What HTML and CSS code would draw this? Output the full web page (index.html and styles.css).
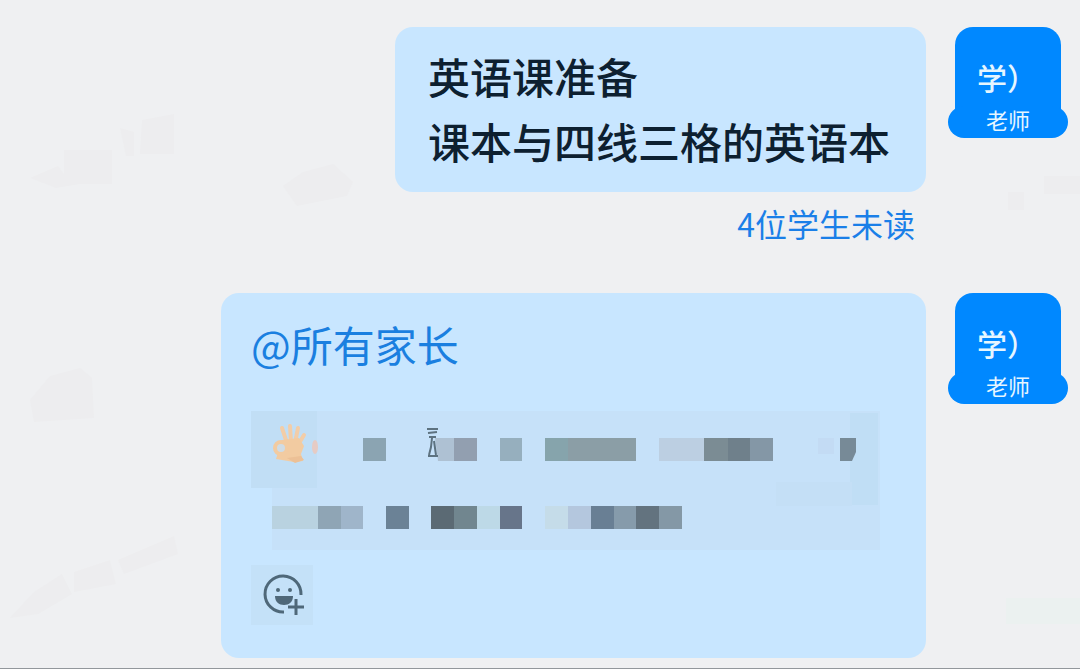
FILE: index.html
```html
<!DOCTYPE html>
<html lang="zh-CN">
<head>
    <meta charset="UTF-8">
    <meta name="viewport" content="width=device-width, initial-scale=1.0">
    <title>班级群</title>
    <link rel="stylesheet" href="styles.css">
</head>
<body>

<svg class="watermark" viewBox="0 0 1080 669" aria-hidden="true">
    <path d="M30 178l28-12 6 8 40-16v22l-48 8zM64 150h48v34H64zM120 128l14 4v24h-8zM142 120l32-6v40h-34z"/>
    <path d="M283 186l20-14 30-8 20 18-6 14-50 10z"/>
    <path d="M30 400l20-24 30-8 12 10 2 40-60 4z"/>
    <path d="M10 618l24-26 28-18 10 20-34 20zM74 572l36-12 6 24-42 8zM118 560l56-24 4 18-54 20z"/>
    <path d="M1008 192h16v18h-16zM1044 176h36v18h-36z"/>
    <path class="tint" d="M1006 598h74v26h-74z"/>
</svg>

<main class="chat">
    <article class="message">
        <div class="content">
            <div class="bubble">
                <p>英语课准备<br>课本与四线三格的英语本</p>
            </div>
            <a class="unread" href="#">4位学生未读</a>
        </div>
        <div class="avatar">
            <span class="name">学）</span>
            <span class="role">老师</span>
        </div>
    </article>

    <article class="message">
        <div class="bubble notice">
            <p><a class="mention" href="#">@所有家长</a></p>

            <!-- hidden text, only the blocks are left -->
            <svg class="mosaic" viewBox="251 411 629 139" role="img" aria-label="已打码内容">
                <path fill="#c6e1f9" d="M251 411h629v139H272v-62h-21z"/>
                <path fill="#c1def5" d="M251 411h66v77h-66z"/>
                <path fill="#c0def5" d="M850 413h28v92h-72v-16h44z"/>
                <path fill="#c4dff6" d="M776 482h76v24h-76z"/>

                <!-- hand -->
                <g fill="none" stroke="#f2cda8" stroke-width="4" stroke-linecap="round">
                    <path d="M282 428l5 15M290 426l1 16M298 428l-3 15M304 435l-6 10"/>
                </g>
                <path fill="#f2cba1" d="M282 440l17-2 5 8-3 8 2 7-9 1-18-3z"/>
                <circle cx="281" cy="448" r="6" fill="#cfdce6" stroke="#f2cba1" stroke-width="4"/>
                <path fill="#ecc096" d="M287 458l14-2 3 4-9 3z"/>
                <ellipse cx="315" cy="447" rx="3" ry="7" fill="#e6cbc4"/>

                <path fill="#8ba4b2" d="M363 438h23v23h-23z"/>
                <path fill="#aec1d3" d="M435 438h19v23h-16z"/>
                <path fill="#929fb0" d="M454 438h23v23h-23z"/>
                <path fill="none" stroke="#5d7280" stroke-width="2" d="M427 429h11M428 433l9-1M429 437h7M432 438l-1 9-2 8M434 441l2 14M428 456h10"/>
                <path fill="#96afbe" d="M500 438h22v23h-22z"/>
                <path fill="#86a4ac" d="M545 438h23v23h-23z"/>
                <path fill="#8b9ea6" d="M568 438h68v23h-68z"/>
                <path fill="#bccfe2" d="M659 438h45v23h-45z"/>
                <path fill="#7b8c94" d="M704 438h24v23h-24z"/>
                <path fill="#6f808b" d="M728 438h22v23h-22z"/>
                <path fill="#8497a6" d="M750 438h23v23h-23z"/>
                <path fill="#c3dbf4" d="M818 438h16v16h-16z"/>
                <path fill="#778a97" d="M840 438h16v14l-4 9h-12z"/>

                <path fill="#b9d2e0" d="M272 506h46v23h-46z"/>
                <path fill="#8fa5b5" d="M318 506h23v23h-23z"/>
                <path fill="#9fb5ca" d="M341 506h22v23h-22z"/>
                <path fill="#6b8296" d="M386 506h23v23h-23z"/>
                <path fill="#5b6a74" d="M431 506h23v23h-23z"/>
                <path fill="#71868f" d="M454 506h23v23h-23z"/>
                <path fill="#bdd9e7" d="M477 506h23v23h-23z"/>
                <path fill="#67758a" d="M500 506h22v23h-22z"/>
                <path fill="#c5dce9" d="M545 506h23v23h-23z"/>
                <path fill="#b4c7de" d="M568 506h23v23h-23z"/>
                <path fill="#697f94" d="M591 506h23v23h-23z"/>
                <path fill="#869bab" d="M614 506h22v23h-22z"/>
                <path fill="#63737f" d="M636 506h23v23h-23z"/>
                <path fill="#8498a6" d="M659 506h23v23h-23z"/>
            </svg>

            <button class="react" type="button" aria-label="添加表情">
                <svg viewBox="0 0 42 42">
                    <path class="line" d="M38 21A18 18 0 1 0 21 38"/>
                    <circle cx="15" cy="16" r="2"/>
                    <circle cx="27" cy="16" r="2"/>
                    <path d="M12 22h18c0 6-4 9-9 9s-9-3-9-9z"/>
                    <path class="line" d="M33 25v16M25 33h16"/>
                </svg>
            </button>
        </div>
        <div class="avatar">
            <span class="name">学）</span>
            <span class="role">老师</span>
        </div>
    </article>
</main>

</body>
</html>
```

FILE: styles.css
```css
* {
    box-sizing: border-box;
}
body {
    margin: 0;
    min-height: 100vh;
    font-family: "Noto Sans CJK SC", sans-serif;
    background-color: #eff0f2;
    border-bottom: 1px solid #92979c;
}
p {
    margin: 0;
}
a {
    text-decoration: none;
}
.watermark {
    position: absolute;
    top: 0;
    left: 0;
    width: 100%;
    fill: #ededef;
}
.watermark .tint {
    fill: #ebf1f0;
}
.chat {
    position: relative;
    display: flex;
    flex-direction: column;
    gap: 44px;
    padding: 27px 12px 10px;
}
.message {
    display: flex;
    justify-content: flex-end;
    align-items: flex-start;
    gap: 22px;
}
.content {
    display: flex;
    flex-direction: column;
    align-items: flex-end;
    gap: 8px;
}
.bubble {
    padding: 16px 36px 19px 33px;
    border-radius: 18px;
    background-color: #c8e6ff;
    color: #0d2030;
    font-size: 42px;
    font-weight: 500;
    line-height: 65px;
}
.unread {
    padding: 0 11px 2px 0;
    color: #1a7fe8;
    font-size: 32px;
    line-height: 47px;
}
.notice {
    display: flex;
    flex-direction: column;
    align-items: flex-start;
    width: 705px;
    padding: 18px 46px 33px 30px;
}
.mention {
    color: #1a7fe0;
    font-weight: 400;
}
.mosaic {
    width: 100%;
    margin-top: 35px;
}
.react {
    display: flex;
    align-items: center;
    justify-content: center;
    width: 62px;
    height: 60px;
    margin-top: 15px;
    padding: 0 0 0 4px;
    border: none;
    background-color: #c4e1f8;
}
.react svg {
    width: 42px;
    height: 42px;
    fill: #4f6879;
}
.react .line {
    fill: none;
    stroke: #4f6879;
    stroke-width: 3;
}
.avatar {
    display: flex;
    flex-direction: column;
    flex-shrink: 0;
    align-items: center;
    width: 120px;
    color: #e6f6ff;
}
.name {
    width: 106px;
    height: 96px;
    padding: 27px 0 0 22px;
    border-radius: 18px 18px 0 0;
    background-color: #0088ff;
    font-size: 30px;
    font-weight: 500;
    line-height: 46px;
}
.role {
    width: 100%;
    margin-top: -17px;
    padding-bottom: 6px;
    border-radius: 16px;
    background-color: #0088ff;
    font-size: 22px;
    line-height: 26px;
    text-align: center;
}
```
